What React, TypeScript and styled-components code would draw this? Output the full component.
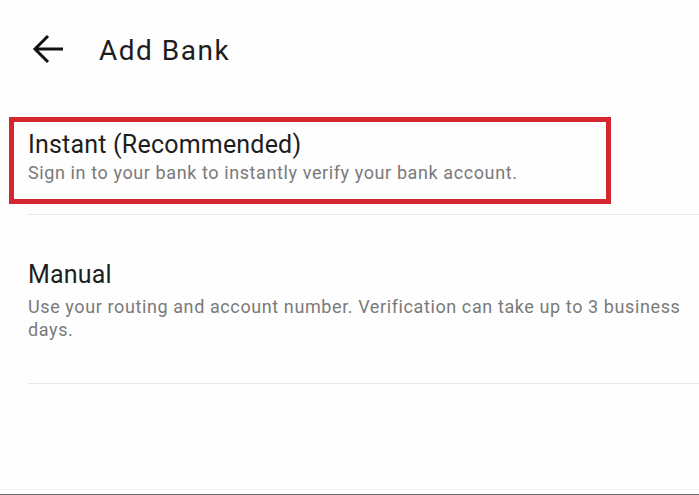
import React from "react";
import styled, { createGlobalStyle } from "styled-components";

const Global = createGlobalStyle`
  html, body { margin: 0; padding: 0; background: #fefefe; }
  body { font-family: Roboto, "Noto Sans", Arial, sans-serif; }
  #root { height: 495px; }
`;

const Page = styled.div`
  height: 495px;
  box-sizing: border-box;
  display: flex;
  flex-direction: column;
  background: #fefefe;
  border-bottom: 1px solid #6c6c6c;
  position: relative;
  &::after {
    content: "";
    position: absolute;
    left: 0;
    right: 0;
    bottom: 4px;
    height: 1px;
    background: #f1f1f1;
  }
`;

const Header = styled.header`
  display: flex;
  align-items: center;
  height: 97px;
  padding-left: 32px;
  box-sizing: border-box;
  flex-shrink: 0;
`;

const BackButton = styled.button`
  border: 0;
  background: none;
  padding: 0;
  width: 32px;
  height: 32px;
  display: flex;
  align-items: center;
  justify-content: center;
  margin-right: 35px;
`;

const Title = styled.h1`
  margin: 4px 0 0 0;
  font-size: 28px;
  line-height: 33px;
  font-weight: 400;
  color: #1d1d1d;
  letter-spacing: 1.5px;
`;

const Option = styled.div<{ $selected?: boolean }>`
  margin: ${(p) => (p.$selected ? "20px 88px 0 9px" : "0 0 0 28px")};
  padding: ${(p) => (p.$selected ? "9px 14px 15px 14px" : "46px 10px 42px 0")};
  border: ${(p) => (p.$selected ? "5px solid #d3262f" : "0")};
  display: flex;
  flex-direction: column;
  gap: ${(p) => (p.$selected ? "2px" : "6px")};
`;

const OptionTitle = styled.div`
  font-size: 25px;
  line-height: 28px;
  color: #1e1e1e;
  letter-spacing: 0.2px;
`;

const OptionText = styled.div`
  font-size: 18px;
  line-height: 23px;
  color: #7a7a7a;
  letter-spacing: 0.6px;
`;

const Divider = styled.hr<{ $top?: number }>`
  margin: ${(p) => p.$top ?? 0}px 0 0 28px;
  border: 0;
  border-top: 1px solid #e6e6e6;
  height: 0;
`;

export default function App() {
  return (
    <>
      <Global />
      <Page>
        <Header>
          <BackButton aria-label="Back">
            <svg width="32" height="32" viewBox="0 0 32 32" fill="none">
              <path d="M3 16H31M16 3L3 16l13 13" stroke="#111" strokeWidth="3" />
            </svg>
          </BackButton>
          <Title>Add Bank</Title>
        </Header>
        <Option $selected>
          <OptionTitle>Instant (Recommended)</OptionTitle>
          <OptionText>Sign in to your bank to instantly verify your bank account.</OptionText>
        </Option>
        <Divider $top={10} />
        <Option>
          <OptionTitle>Manual</OptionTitle>
          <OptionText>
            Use your routing and account number. Verification can take up to 3 business days.
          </OptionText>
        </Option>
        <Divider />
      </Page>
    </>
  );
}
